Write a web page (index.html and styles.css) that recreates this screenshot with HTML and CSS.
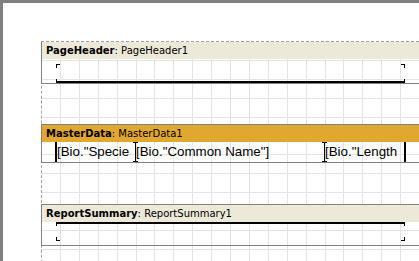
FILE: index.html
```html
<!DOCTYPE html>
<html lang="en">
<head>
  <meta charset="UTF-8" />
  <title>Report designer</title>
  <link rel="stylesheet" href="styles.css">
</head>
<body>
  <div class="frame">
    <div class="page">

      <section class="band band-first">
        <div class="band-title"><b>PageHeader</b>: PageHeader1</div>
        <div class="band-body header-body">
          <div class="obj line-bottom">
            <i class="mark tl"></i><i class="mark tr"></i><i class="mark bl"></i><i class="mark br"></i>
          </div>
        </div>
      </section>

      <section class="band band-data">
        <div class="band-title"><b>MasterData</b>: MasterData1</div>
        <div class="band-body data-body">
          <div class="field f-specie">[Bio."Specie</div>
          <div class="field f-name">[Bio."Common Name"]</div>
          <div class="field f-length">[Bio."Length</div>
        </div>
      </section>

      <section class="band band-summary">
        <div class="band-title"><b>ReportSummary</b>: ReportSummary1</div>
        <div class="band-body summary-body">
          <div class="obj line-top">
            <i class="mark tl"></i><i class="mark tr"></i><i class="mark bl"></i><i class="mark br"></i>
          </div>
        </div>
      </section>

    </div>
  </div>
</body>
</html>
```

FILE: styles.css
```css
body {
  margin: 0;
  background: #ffffff;
  overflow: hidden;
}

.frame {
  height: 100vh;
  box-sizing: border-box;
  border-left: 3px solid #808080;
  border-top: 3px solid #808080;
  overflow: hidden;
}

/* printable area with margin lines and 0.5cm grid */
.page {
  margin: 38px 0 0 38px;
  min-height: 320px;
  border-top: 1px dashed #a0a0a0;
  border-left: 1px dashed #a0a0a0;
  background-image:
    repeating-linear-gradient(to right, transparent 0 17.9px, #e4e4e4 17.9px 18.9px),
    repeating-linear-gradient(to bottom, transparent 0 17.9px, #e4e4e4 17.9px 18.9px);
}

.band {
  width: 440px;
  margin-left: -1px;
  border-top: 1px solid #808080;
  border-left: 1px solid #808080;
  border-bottom: 1px solid #808080;
}

.band-first {
  border-top: 0;
}

.band-data {
  margin-top: 40px;
}

.band-summary {
  margin-top: 41px;
}

.band-title {
  height: 17px;
  line-height: 17px;
  padding-left: 4px;
  background: #ece9d8;
  font-family: "DejaVu Sans", sans-serif;
  font-size: 10px;
  color: #000;
  white-space: nowrap;
}

.band-data .band-title {
  background: #e0a82e;
}

.header-body {
  height: 24px;
  padding-top: 5px;
  box-sizing: border-box;
}

.summary-body {
  height: 23px;
}

.data-body {
  height: 20px;
  display: flex;
  padding-left: 13px;
}

/* report objects */
.obj {
  position: relative;
  width: 349px;
  height: 19px;
  margin-left: 14px;
  box-sizing: border-box;
}

.line-bottom {
  border-bottom: 2px solid #000;
}

.line-top {
  border-top: 2px solid #000;
}

.mark {
  position: absolute;
  width: 4px;
  height: 4px;
  box-sizing: border-box;
}

.mark.tl { top: 0; left: 0; border-top: 1px solid #000; border-left: 1px solid #000; }
.mark.tr { top: 0; right: 0; border-top: 1px solid #000; border-right: 1px solid #000; }
.mark.bl { bottom: 0; left: 0; border-bottom: 1px solid #000; border-left: 1px solid #000; }
.mark.br { bottom: 0; right: 0; border-bottom: 1px solid #000; border-right: 1px solid #000; }

.line-bottom .mark.bl,
.line-bottom .mark.br { bottom: -2px; }

.line-top .mark.tl,
.line-top .mark.tr { top: -2px; }

.field {
  position: relative;
  height: 20px;
  box-sizing: border-box;
  font-family: "Liberation Sans", Arial, sans-serif;
  font-size: 13.33px;
  line-height: 20px;
  color: #000;
  white-space: nowrap;
  overflow: visible;
}

.f-specie {
  width: 80px;
  border-left: 2px solid #000;
  overflow: hidden;
}

.f-name {
  width: 189px;
  padding-left: 1px;
}

.f-length {
  width: 82px;
  padding-left: 1px;
  border-right: 2px solid #000;
  overflow: hidden;
}

/* joined corner marks between neighbouring fields */
.f-name::before,
.f-name::after {
  content: "";
  position: absolute;
  top: 0;
  width: 5px;
  height: 20px;
  box-sizing: border-box;
  border-top: 1px solid #000;
  border-bottom: 1px solid #000;
  background: linear-gradient(to right, transparent 2px, #000 2px, #000 3px, transparent 3px);
}

.f-name::before {
  left: -2px;
}

.f-name::after {
  right: -3px;
}
```
